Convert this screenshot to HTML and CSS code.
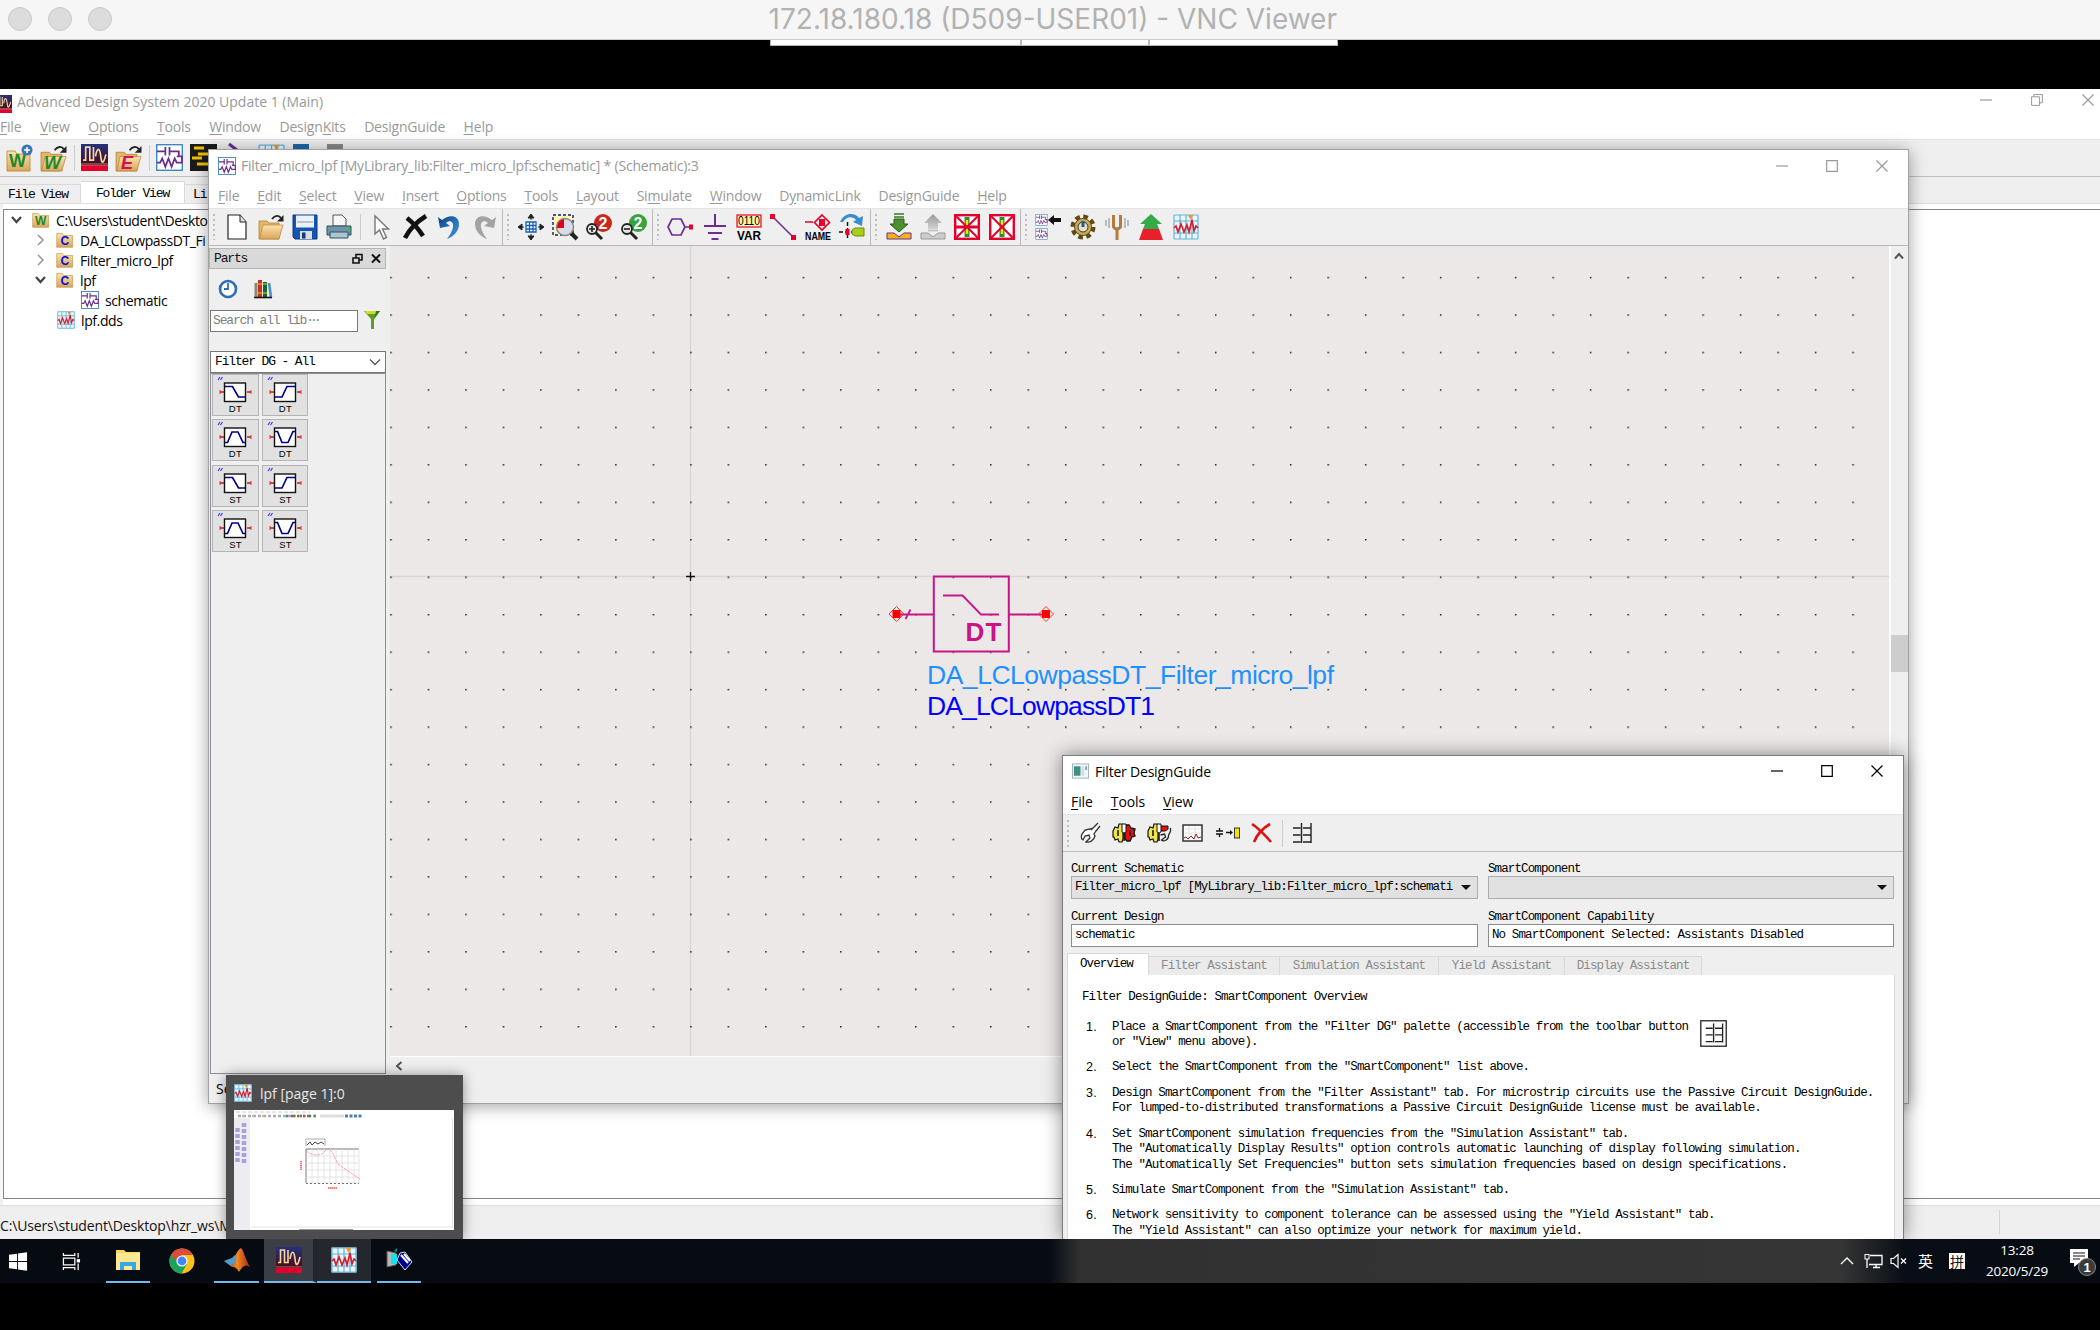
FILE: index.html
```html
<!DOCTYPE html>
<html lang="en">
<head>
<meta charset="utf-8">
<title>172.18.180.18 (D509-USER01) - VNC Viewer</title>
<link rel="stylesheet" href="styles.css">
</head>
<body>
<svg class="defs" width="0" height="0">
  <defs>
    <linearGradient id="g-ads" x1="0" y1="0" x2="0" y2="1"><stop offset="0" stop-color="#23317f"/><stop offset="1" stop-color="#4a0d1c"/></linearGradient>
    <linearGradient id="g-fold" x1="0" y1="0" x2="0" y2="1"><stop offset="0" stop-color="#fbe3b0"/><stop offset="1" stop-color="#dca557"/></linearGradient>
    <linearGradient id="g-up" x1="0" y1="0" x2="0" y2="1"><stop offset="0" stop-color="#9a9a9a"/><stop offset="1" stop-color="#d0d0d0"/></linearGradient>
    <linearGradient id="g-undo" x1="0" y1="0" x2="1" y2="1"><stop offset="0" stop-color="#0d3f8a"/><stop offset="1" stop-color="#3f9be0"/></linearGradient>
    <linearGradient id="g-flame" x1="0" y1="0" x2="1" y2="0"><stop offset="0" stop-color="#7b1d10"/><stop offset=".5" stop-color="#f08a24"/><stop offset="1" stop-color="#a9250f"/></linearGradient>
    <pattern id="grid-dots" x="0.2" y="29.8" width="37.49" height="37.46" patternUnits="userSpaceOnUse"><rect width="1.5" height="1.5" fill="#1c1c1c"/></pattern>
    <symbol id="i-ads" viewBox="0 0 26 26"><rect width="26" height="19" fill="url(#g-ads)"/><rect y="19" width="26" height="1.5" fill="#6d4a4a"/><rect y="20.500" width="26" height="5.500" fill="#e4002b"/><path d="M2 15.500h2.500V3h4v12.500h3.500V3M14 12c1.500-9 4-9 5 0s3 6 5-2" fill="none" stroke="#f6d9a0" stroke-width="1.600"/></symbol>
    <symbol id="i-folder" viewBox="0 0 26 26"><path d="M1 5h8l2 3h13v17H1z" fill="url(#g-fold)" stroke="#b98337" stroke-width=".8"/></symbol>
    <symbol id="i-ofolder" viewBox="0 0 26 26"><path d="M1 7h8l2 2h10v16H1z" fill="#e7b566" stroke="#a87a35" stroke-width=".7"/><path d="M5 11h20l-4 14H1.500z" fill="url(#g-fold)" stroke="#b98337" stroke-width=".7"/><path d="M14 5c3-4 7-4 9-1" fill="none" stroke="#222" stroke-width="1.800"/><path d="M25.500 1v6.500h-6.500z" fill="#222"/></symbol>
    <symbol id="i-sch" viewBox="0 0 26 26"><rect x=".7" y=".7" width="24.600" height="24.600" fill="#fff" stroke="#2a7ab8" stroke-width="1.200"/><path d="M1 7h8M9 3v8M13 3v8M13 7h9v5M1 18h3l2-4 3 8 3-8 3 8 3-8 2 4h5V12h-5" fill="none" stroke="#6b2d90" stroke-width="1.700"/></symbol>
    <symbol id="i-dds" viewBox="0 0 26 26"><rect x=".5" y=".5" width="25" height="25" fill="#eaf6fb"/><path d="M1 1v24M7 1v24M13 1v24M19 1v24M25 1v24M1 1h24M1 7h24M1 19h24M1 25h24" stroke="#5fb4dc" stroke-width="1.200"/><path d="M1 14l2-2 2 6 3-8 3 8 3-7 2 7 3-12 2 11 2-5 2 2" fill="none" stroke="#d3202f" stroke-width="1.700"/><path d="M15 1h5l-2.500 5z" fill="#f7941d"/></symbol>
    <symbol id="i-var" viewBox="0 0 26 26"><rect x="1" y="1" width="24" height="12" fill="#fff6a8" stroke="#e4002b" stroke-width="1.200"/></symbol>
    <symbol id="i-x26" viewBox="0 0 26 26"><rect x="1.200" y="1.200" width="23.600" height="23.600" fill="#fff" stroke="#e4002b" stroke-width="2.400"/><path d="M13 3v20" stroke="#2e8b3a" stroke-width="5"/><path d="M13 6v14" stroke="#f2e300" stroke-width="2.400"/><path d="M1 1l24 24M25 1L1 25" stroke="#e4002b" stroke-width="2"/></symbol>
    <symbol id="i-gear" viewBox="0 0 26 26"><circle cx="13" cy="13" r="10" fill="none" stroke="#5d4a16" stroke-width="5" stroke-dasharray="4.500 3.350"/><circle cx="13" cy="13" r="8.500" fill="#c9ac55" stroke="#5d4a16"/><circle cx="13" cy="13" r="5" fill="#e8e0c0" stroke="#333"/><path d="M13 7v6" stroke="#1f5aa8" stroke-width="3"/></symbol>
    <symbol id="i-table" viewBox="0 0 20 22"><path d="M0 6h7.500M0 13h7.500M0 20h7.500M8.500 1v20M10 6h8M10 13h8M10 20h8M18 1v20" fill="none" stroke="#222" stroke-width="1.400"/></symbol>
    <symbol id="i-dggear" viewBox="0 0 24 22"><path d="M1 9l2-4 3 1 1-4h3l1 1v14l-1 3H7l-1-3-3 1-1-3H1z" fill="#f3e64b" stroke="#111" stroke-width="1.200"/><path d="M10 2h4v8q-2 2-4 0z" fill="#fff" stroke="#111"/><path d="M12 11v8M6 8v6" stroke="#111" stroke-width="1.500"/></symbol>
    <symbol id="f-base" viewBox="0 0 47 42"><path d="M8 18h4M35 18h4" stroke="#111"/><path d="M8 18h3M36 18h3M8 16v4M39 16v4" stroke="#f22"/><rect x="12.500" y="9" width="21" height="18.500" fill="#fff" stroke="#111" stroke-width="1.400"/><path d="M6 6l2-3M8.500 6l2-3" stroke="#33f" stroke-width="1.100"/></symbol>
    <symbol id="f-lp" viewBox="0 0 47 42"><use href="#f-base" width="47" height="42"/><path d="M13 12.500h7.500l6 10.500h7" fill="none" stroke="#00008b" stroke-width="1.700"/></symbol>
    <symbol id="f-hp" viewBox="0 0 47 42"><use href="#f-base" width="47" height="42"/><path d="M13 23h7l5-10.500h8.500" fill="none" stroke="#00008b" stroke-width="1.700"/></symbol>
    <symbol id="f-bp" viewBox="0 0 47 42"><use href="#f-base" width="47" height="42"/><path d="M13 23.500h2.500L20 13h6l5 10.500h2.500" fill="none" stroke="#00008b" stroke-width="1.700"/></symbol>
    <symbol id="f-bs" viewBox="0 0 47 42"><use href="#f-base" width="47" height="42"/><path d="M13 12.500h2.500L20 23.500h6l5-11h2.500" fill="none" stroke="#00008b" stroke-width="1.700"/></symbol>
    <symbol id="w-min" viewBox="0 0 12 12"><path d="M0 6h12" stroke="currentColor" stroke-width="1.200"/></symbol>
    <symbol id="w-max" viewBox="0 0 12 12"><path d="M.7.700h10.600v10.600H.7z" fill="none" stroke="currentColor" stroke-width="1.200"/></symbol>
    <symbol id="w-rest" viewBox="0 0 12 12"><path d="M.6 2.800h8v8.600h-8zM2.800 2.800V.6h8.600v8.200H8.600" fill="none" stroke="currentColor"/></symbol>
    <symbol id="w-close" viewBox="0 0 12 12"><path d="M.5.500l11 11M11.500.500l-11 11" stroke="currentColor" stroke-width="1.200"/></symbol>
  </defs>
</svg>

<div class="screen">
  <header class="vnc-bar">
    <div class="lights"><i></i><i></i><i></i></div>
    <h1>172.18.180.18 (D509-USER01) - VNC Viewer</h1>
  </header>
  <div class="vnc-tab"><i></i><i></i><i></i></div>

  <section class="win main-win">
    <div class="titlebar dim">
      <svg class="ticon"><use href="#i-ads"/></svg>
      <span class="ttext t-main">Advanced Design System 2020 Update 1 (Main)</span>
      <div class="controls"><svg><use href="#w-min"/></svg><svg><use href="#w-rest"/></svg><svg><use href="#w-close"/></svg></div>
    </div>
    <nav class="menu dim"><span><u>F</u>ile</span><span><u>V</u>iew</span><span><u>O</u>ptions</span><span><u>T</u>ools</span><span><u>W</u>indow</span><span>Design<u>K</u>its</span><span>DesignGuide</span><span><u>H</u>elp</span></nav>
    <div class="main-tools">
      <svg viewBox="0 0 28 28"><use href="#i-folder" y="2" width="26" height="26"/><text x="3" y="23" class="lt" fill="#1a8a2c">W</text><circle cx="21" cy="6" r="5.500" fill="#3b74b8"/><path d="M21 3v6M18 6h6" stroke="#fff" stroke-width="1.600"/></svg>
      <svg viewBox="0 0 28 28"><use href="#i-ofolder" y="1" width="27" height="27"/><text x="4" y="25" class="lt it" fill="#1a8a2c">W</text></svg>
      <b></b>
      <svg viewBox="0 0 28 28"><use href="#i-ads" width="27" height="27"/></svg>
      <svg viewBox="0 0 28 28"><use href="#i-ofolder" y="1" width="27" height="27"/><text x="6" y="25" class="lt it" fill="#d3114f">E</text></svg>
      <b></b>
      <svg viewBox="0 0 28 28"><use href="#i-sch" width="27" height="27"/></svg>
      <svg viewBox="0 0 28 28"><rect width="27" height="27" fill="#1b1b1b"/><path d="M4 4h10M8 10h14M2 14h10M7 20h14" stroke="#f2c200" stroke-width="3"/></svg>
      <svg viewBox="0 0 28 28"><path d="M5 0l8 6" stroke="#6b2d90" stroke-width="3"/></svg>
      <svg viewBox="0 0 28 28"><use href="#i-dds" width="27" height="27"/></svg>
      <svg viewBox="0 0 28 28"><rect x="1" width="16" height="20" fill="#1d66a8"/></svg>
      <svg viewBox="0 0 28 28"><rect x="1" width="16" height="20" fill="#888"/></svg>
    </div>
    <div class="main-tabs"><span>File View</span><span class="on">Folder View</span><span>Li</span></div>
    <div class="tree">
      <div class="row"><svg class="ar"><path d="M3 5l4.500 5L12 5" stroke="#444" stroke-width="2.200" fill="none"/></svg><svg class="ti" viewBox="0 0 18 18"><use href="#i-folder" y="-1" width="18" height="18"/><text x="3" y="14" class="ls" fill="#1a8a2c">W</text></svg><span>C:\Users\student\Deskto</span></div>
      <div class="row in"><svg class="ar"><path d="M5 3l5 5-5 5" stroke="#999" stroke-width="1.600" fill="none"/></svg><svg class="ti" viewBox="0 0 18 18"><use href="#i-folder" y="-1" width="18" height="18"/><text x="4.500" y="14" class="ls" fill="#0011dd">C</text></svg><span>DA_LCLowpassDT_Fi</span></div>
      <div class="row in"><svg class="ar"><path d="M5 3l5 5-5 5" stroke="#999" stroke-width="1.600" fill="none"/></svg><svg class="ti" viewBox="0 0 18 18"><use href="#i-folder" y="-1" width="18" height="18"/><text x="4.500" y="14" class="ls" fill="#0011dd">C</text></svg><span>Filter_micro_lpf</span></div>
      <div class="row in"><svg class="ar"><path d="M3 5l4.500 5L12 5" stroke="#444" stroke-width="2.200" fill="none"/></svg><svg class="ti" viewBox="0 0 18 18"><use href="#i-folder" y="-1" width="18" height="18"/><text x="4.500" y="14" class="ls" fill="#0011dd">C</text></svg><span>lpf</span></div>
      <div class="row in2"><svg class="ti"><use href="#i-sch"/></svg><span>schematic</span></div>
      <div class="row in1"><svg class="ti"><use href="#i-dds"/></svg><span>lpf.dds</span></div>
    </div>
    <div class="status"><span>C:\Users\student\Desktop\hzr_ws\M</span><i></i></div>
  </section>

  <section class="win sch-win">
    <div class="titlebar dim">
      <svg class="ticon"><use href="#i-sch"/></svg>
      <span class="ttext t-sch">Filter_micro_lpf [MyLibrary_lib:Filter_micro_lpf:schematic] * (Schematic):3</span>
      <div class="controls"><svg><use href="#w-min"/></svg><svg><use href="#w-max"/></svg><svg><use href="#w-close"/></svg></div>
    </div>
    <nav class="menu dim"><span><u>F</u>ile</span><span><u>E</u>dit</span><span><u>S</u>elect</span><span><u>V</u>iew</span><span><u>I</u>nsert</span><span><u>O</u>ptions</span><span><u>T</u>ools</span><span><u>L</u>ayout</span><span>Si<u>m</u>ulate</span><span><u>W</u>indow</span><span>D<u>y</u>namicLink</span><span>DesignGuide</span><span><u>H</u>elp</span></nav>
    <div class="tools">
      <div class="grp">
        <svg viewBox="0 0 26 26"><path d="M4 1h12l6 7v17H4z" fill="#fff" stroke="#222" stroke-width="1.200"/><path d="M16 1v7h6" fill="#ddd" stroke="#222"/></svg>
        <svg viewBox="0 0 26 26"><use href="#i-ofolder"/></svg>
        <svg viewBox="0 0 26 26"><path d="M1 1h24v24H3l-2-2z" fill="#1555b0" stroke="#0b3a80"/><rect x="4" y="1.500" width="18" height="12" fill="#eaf1f8"/><path d="M5 8h16" stroke="#b6c4d6" stroke-width="2"/><rect x="8" y="17" width="12" height="8" fill="#d8dde3"/><rect x="10" y="18.500" width="3.500" height="6" fill="#123a78"/></svg>
        <svg viewBox="0 0 26 26"><path d="M7 12V1h9l4 4v7z" fill="#f4f8fb" stroke="#555"/><path d="M1 12h24v9H1z" fill="#6f93ab" stroke="#34505f"/><path d="M4 18h18v6H4z" fill="#a9c6d8" stroke="#34505f"/><path d="M22 13v4" stroke="#3c3" stroke-width="2"/></svg>
        <b></b>
        <svg viewBox="0 0 26 26"><path d="M7 2v18l4.500-4 4 9 3-1.500-4-8.500h6z" fill="#fff" stroke="#777" stroke-width="1.400"/></svg>
        <svg viewBox="0 0 26 26"><path d="M5 4c5 4 11 10 16 18M24 2C16 7 8 14 3 24" stroke="#111" stroke-width="4.500" fill="none"/></svg>
        <svg viewBox="0 0 26 26"><path d="M1 3l2 11 10-2-4-3c4-4 8-1 7 4-.5 4-3 8-6 12 8-3 12-9 12-15C22 1 12 0 5 6z" fill="url(#g-undo)"/></svg>
        <svg viewBox="0 0 26 26"><path d="M25 3l-2 11-10-2 4-3c-4-4-8-1-7 4 .5 4 3 8 6 12-8-3-12-9-12-15C4 1 14 0 21 6z" fill="#a3a3a3"/></svg>
      </div>
      <div class="grp">
        <svg viewBox="0 0 26 26"><path d="M13 0l3 4h-6zM13 26l3-4h-6zM0 13l4-3v6zM26 13l-4-3v6zM13 3v3M13 20v3M3 13h3M20 13h3" fill="#222" stroke="#222"/><path d="M8 8h10v10H8zM11.500 8v10M15 8v10M8 11.500h10M8 15h10" fill="#fff" stroke="#1560b8" stroke-width="1.300"/></svg>
        <svg viewBox="0 0 26 26"><path d="M1 1h20v20H1z" fill="#fbf8b0" stroke="#14148c" stroke-dasharray="3 2" stroke-width="1.400"/><path d="M18 18l7 7" stroke="#222" stroke-width="4"/><circle cx="13" cy="13" r="8.500" fill="#d8dce6" stroke="#888" stroke-width="1.500"/><path d="M12 5v9H5c0-5 3-8.500 7-9z" fill="#e4001b"/></svg>
        <svg viewBox="0 0 26 26"><path d="M9 18l7 7" stroke="#222" stroke-width="3"/><circle cx="17" cy="9" r="9" fill="#c8281c"/><text x="12.500" y="15" class="lz">2</text><circle cx="6" cy="15" r="5" fill="#e6e6e6" stroke="#222" stroke-width="1.800"/><path d="M6 12v6M3 15h6" stroke="#222" stroke-width="1.600"/></svg>
        <svg viewBox="0 0 26 26"><path d="M9 18l7 7" stroke="#222" stroke-width="3"/><circle cx="17" cy="9" r="9" fill="#37a33a"/><text x="12.500" y="15" class="lz">2</text><circle cx="6" cy="15" r="5" fill="#e6e6e6" stroke="#222" stroke-width="1.800"/><path d="M3 15h6" stroke="#222" stroke-width="1.600"/></svg>
      </div>
      <div class="grp">
        <svg viewBox="0 0 26 26"><path d="M1 13l4-8h9l4 8-4 8H5zM18 13h4" fill="none" stroke="#6b2d90" stroke-width="1.700"/><rect x="22" y="10.500" width="4" height="5" fill="#e4002b"/></svg>
        <svg viewBox="0 0 26 26"><path d="M13 0v12M2 12h22M6 19h14M9.500 25h7" stroke="#6b2d90" stroke-width="2"/></svg>
        <svg viewBox="0 0 26 26"><use href="#i-var"/><text x="2" y="11" textLength="22" lengthAdjust="spacingAndGlyphs" class="ln">0110</text><text x="1" y="26" textLength="24" lengthAdjust="spacingAndGlyphs" class="lv">VAR</text></svg>
        <svg viewBox="0 0 26 26"><path d="M3 3l20 20" stroke="#6b2d90" stroke-width="1.600"/><path d="M0 0h5v5H0zM21 21h5v5h-5z" fill="#e4002b"/></svg>
        <svg viewBox="0 0 26 26"><path d="M0 8h8M17 1l7.500 7.500L17 16 9.500 8.500z" fill="none" stroke="#e4002b" stroke-width="1.700"/><rect x="14" y="5" width="6" height="7" fill="#e4002b"/><text x="0" y="26" textLength="26" lengthAdjust="spacingAndGlyphs" class="lm">NAME</text></svg>
        <svg viewBox="0 0 26 26"><path d="M1 8C5-2 16-2 20 4l4-2-1 10-9-4 3-2c-3-4-10-4-13 2z" fill="#3a8ccc"/><path d="M8.500 8v18M0 18h14" stroke="#111" stroke-width="1.500" stroke-dasharray="4 2"/><rect x="6.500" y="15" width="4" height="6" fill="#e4002b"/><path d="M13 16l3-2h9v8h-9l-3-2z" fill="#a8cf1e" stroke="#6d8a10"/></svg>
      </div>
      <div class="grp">
        <svg viewBox="0 0 26 26"><path d="M8 0h10M8 3h10" stroke="#3d7a22" stroke-width="1.600"/><path d="M8 5h10v5h4l-9 8-9-8h4z" fill="#4b9130" stroke="#2c5c18"/><path d="M1 19h7l5 4 5-4h7v6H1z" fill="#f7b316" stroke="#6b2d90"/></svg>
        <svg viewBox="0 0 26 26"><path d="M13 0l9 9h-4v6H8V9H4z" fill="url(#g-up)"/><path d="M8 16.500h10" stroke="#bbb" stroke-width="1.600"/><path d="M1 19h7l5 4 5-4h7v6H1z" fill="#ccc" stroke="#999"/></svg>
        <svg viewBox="0 0 26 26"><use href="#i-x26"/><path d="M1 13h24" stroke="#e4002b" stroke-width="3"/></svg>
        <svg viewBox="0 0 26 26"><use href="#i-x26"/></svg>
      </div>
      <div class="grp last">
        <svg viewBox="0 0 26 26"><use href="#i-sch" width="13" height="12"/><use href="#i-sch" y="14" width="13" height="12"/><path d="M13 6l6-5v3h7v4h-7v3z" fill="#111"/></svg>
        <svg viewBox="0 0 26 26"><use href="#i-gear"/></svg>
        <svg viewBox="0 0 26 26"><path d="M9.500 1v12q3.500 4 7 0V1M13 15v11" fill="none" stroke="#b57a3c" stroke-width="3"/><path d="M5 4v10M2 6v6M21 4v10M24 6v6" stroke="#888"/></svg>
        <svg viewBox="0 0 26 26"><path d="M13 0l11 10h-5l2 5H5l2-5H2z" fill="#35ab48"/><path d="M5 15h16l4 11H1z" fill="#e8202a"/></svg>
        <svg viewBox="0 0 26 26"><use href="#i-dds"/></svg>
      </div>
    </div>
    <div class="work">
      <aside class="parts">
        <div class="phead"><span>Parts</span><svg viewBox="0 0 30 12"><path d="M1 5h6v5H1zM4 5V1.500h6V7H7" fill="none" stroke="#111" stroke-width="1.600"/><path d="M20 1.500l8 8M28 1.500l-8 8" stroke="#111" stroke-width="2"/></svg></div>
        <div class="pico">
          <svg viewBox="0 0 20 20"><circle cx="10" cy="10" r="8" fill="#fff" stroke="#2f6bbd" stroke-width="2.600"/><path d="M10 4v6H6" fill="none" stroke="#2f6bbd" stroke-width="1.800"/></svg>
          <svg viewBox="0 0 20 20"><path d="M3 4v14" stroke="#8a8a6a" stroke-width="3"/><path d="M7 1v17" stroke="#c8302a" stroke-width="4"/><path d="M12 3v15" stroke="#14692e" stroke-width="4"/><path d="M16 4l2 14" stroke="#4a8fd0" stroke-width="2.600"/><path d="M5 5h9M5 14h9" stroke="#e8d020"/><path d="M1 18.500h18" stroke="#111" stroke-width="1.600"/></svg>
        </div>
        <div class="psearch"><div class="sbox">Search all lib<em>···</em></div><svg viewBox="0 0 16 20"><path d="M0 1h16l-6 8v10H7V9z" fill="#5c9e1e"/><path d="M1 1h14l-2 3H3z" fill="#d2dc28"/><path d="M12 1h4l-6 8z" fill="#2b7a1e"/></svg></div>
        <div class="combo"><span>Filter DG - All</span><svg viewBox="0 0 12 8"><path d="M1 1.500l5 5 5-5" fill="none" stroke="#555" stroke-width="1.300"/></svg></div>
        <div class="plist">
          <div class="pb"><svg><use href="#f-lp"/></svg><span>DT</span></div><div class="pb"><svg><use href="#f-hp"/></svg><span>DT</span></div>
          <div class="pb"><svg><use href="#f-bp"/></svg><span>DT</span></div><div class="pb"><svg><use href="#f-bs"/></svg><span>DT</span></div>
          <div class="pb"><svg><use href="#f-lp"/></svg><span>ST</span></div><div class="pb"><svg><use href="#f-hp"/></svg><span>ST</span></div>
          <div class="pb"><svg><use href="#f-bp"/></svg><span>ST</span></div><div class="pb"><svg><use href="#f-bs"/></svg><span>ST</span></div>
        </div>
      </aside>
      <div class="canvas-col">
        <svg class="canvas" width="1499" height="810" viewBox="0 0 1499 810">
          <rect width="1499" height="810" fill="#ece8e8"/>
          <g transform="translate(0 1)">
            <path d="M300.500 -1v810M0 329.500h1499" stroke="#dad6d6" stroke-width="1.500"/>
            <rect width="1498" height="808" fill="url(#grid-dots)"/>
            <path d="M296 329.500h9M300.500 325v9" stroke="#111" stroke-width="1.300"/>
            <g fill="none" stroke="#c71585">
              <rect x="543.800" y="329.500" width="75" height="75" stroke-width="2"/>
              <path d="M507 367.500h37M619 367.500h37M553 348.500h19.500l18.500 19h18M515.500 372l5-9.500" stroke-width="1.800"/>
            </g>
            <path d="M502.500 363h8v8h-8zM652 363h8v8h-8z" fill="#f00"/>
            <path d="M499 367l7.500-7.500 7.500 7.500-7.500 7.500zM648.500 367l7.500-7.500 7.500 7.500-7.500 7.500z" fill="none" stroke="#f22" stroke-width=".9"/>
            <text x="575.500" y="394" textLength="36" class="c-dt">DT</text>
            <text x="537" y="437" textLength="407" class="c-lbl" fill="#1e90ff">DA_LCLowpassDT_Filter_micro_lpf</text>
            <text x="537" y="468" textLength="228" class="c-lbl" fill="#0000ff">DA_LCLowpassDT1</text>
          </g>
        </svg>
        <div class="hscroll"><svg viewBox="0 0 8 10"><path d="M6.500 1L2 5l4.500 4" fill="none" stroke="#555" stroke-width="2"/></svg></div>
      </div>
      <div class="vscroll"><svg viewBox="0 0 10 8"><path d="M1 6.500L5 2l4 4.500" fill="none" stroke="#555" stroke-width="2"/></svg><i></i></div>
    </div>
    <div class="sstatus">Se</div>
  </section>

  <section class="win dlg">
    <div class="titlebar">
      <svg class="ticon" viewBox="0 0 18 16"><rect x=".5" y=".5" width="17" height="15" fill="#f4f7f9" stroke="#9fb0b8"/><rect x="2" y="3" width="7" height="10" fill="#3f8f86"/><rect x="10" y="3" width="3" height="10" fill="#d4dde2"/><rect x="14" y="3" width="2" height="4" fill="#78a8d0"/></svg>
      <span class="ttext">Filter DesignGuide</span>
      <div class="controls"><svg><use href="#w-min"/></svg><svg><use href="#w-max"/></svg><svg><use href="#w-close"/></svg></div>
    </div>
    <nav class="menu"><span><u>F</u>ile</span><span><u>T</u>ools</span><span><u>V</u>iew</span></nav>
    <div class="dtools">
      <svg viewBox="0 0 24 22"><path d="M20 1l-7 7M22 4l-4 5-2 3 1 2c-1 4-5 7-9 6l4-4-1-3-4 1-2 4c-2-1-2-4-1-6l3-4 5-1 3-1" fill="#fff" stroke="#333" stroke-width="1.300"/></svg>
      <svg viewBox="0 0 24 22"><path d="M13 5l1-2h3l2 3 4 1-1 4 1 3-3 1-2 4h-3l-2-2z" fill="#e01010" stroke="#111" stroke-width="1.300"/><path d="M18 8v6" stroke="#111" stroke-width="1.500"/><use href="#i-dggear"/></svg>
      <svg viewBox="0 0 24 22"><path d="M13 4h8v5h-8z" fill="#e01010" stroke="#111"/><use href="#i-dggear"/><path d="M23.500 6c1 5-2 5-2 8 0 4-5 6-7 4l4-3-1-3-4 1" fill="#eee" stroke="#222" stroke-width="1.300"/></svg>
      <svg viewBox="0 0 24 22"><rect x="2" y="3" width="19" height="16" fill="#fafafa" stroke="#333" stroke-width="1.500"/><path d="M4 7h15M4 11h15M8 4v14M14 4v14" stroke="#e4e4e4"/><path d="M3 16l2-1 2 2 3-3 3 3 2-5 2 4 3-1" fill="none" stroke="#9a2020"/></svg>
      <svg viewBox="0 0 24 22"><path d="M0 9h7M0 12h7M3.500 6v3M3.500 12v3M10 10.500h5" stroke="#111" stroke-width="1.300"/><path d="M14 8l3 2.500-3 2.500z" fill="#111"/><rect x="18.500" y="6" width="5" height="10" fill="#f2e300" stroke="#333"/></svg>
      <svg viewBox="0 0 24 22"><path d="M2 2c6 4 13 11 19 18M20 2C13 6 7 13 4 20" fill="none" stroke="#e01010" stroke-width="2.600"/></svg>
      <b></b>
      <svg viewBox="0 0 24 22"><use href="#i-table" x="2" width="20" height="22"/></svg>
    </div>
    <div class="form">
      <div class="field"><label>Current Schematic</label><div class="sel"><span>Filter_micro_lpf [MyLibrary_lib:Filter_micro_lpf:schemati</span><i></i></div></div>
      <div class="field"><label>SmartComponent</label><div class="sel"><span></span><i></i></div></div>
      <div class="field"><label>Current Design</label><div class="inp">schematic</div></div>
      <div class="field"><label>SmartComponent Capability</label><div class="inp">No SmartComponent Selected: Assistants Disabled</div></div>
    </div>
    <div class="dtabs"><span class="on">Overview</span><span>Filter Assistant</span><span>Simulation Assistant</span><span>Yield Assistant</span><span>Display Assistant</span></div>
    <div class="panel">
      <p class="hd">Filter DesignGuide: SmartComponent Overview</p>
      <ol>
        <li><b>1.</b><div>Place a SmartComponent from the "Filter DG" palette (accessible from the toolbar button<br>or "View" menu above).</div><svg class="tbl" viewBox="0 0 27 27"><rect x=".8" y=".8" width="25.400" height="25.400" fill="#fff" stroke="#111" stroke-width="1.200"/><use href="#i-table" x="5.500" y="2.500" width="19" height="21"/></svg></li>
        <li><b>2.</b><div>Select the SmartComponent from the "SmartComponent" list above.</div></li>
        <li><b>3.</b><div>Design SmartComponent from the "Filter Assistant" tab. For microstrip circuits use the Passive Circuit DesignGuide.<br>For lumped-to-distributed transformations a Passive Circuit DesignGuide license must be available.</div></li>
        <li><b>4.</b><div>Set SmartComponent simulation frequencies from the "Simulation Assistant" tab.<br>The "Automatically Display Results" option controls automatic launching of display following simulation.<br>The "Automatically Set Frequencies" button sets simulation frequencies based on design specifications.</div></li>
        <li><b>5.</b><div>Simulate SmartComponent from the "Simulation Assistant" tab.</div></li>
        <li><b>6.</b><div>Network sensitivity to component tolerance can be assessed using the "Yield Assistant" tab.<br>The "Yield Assistant" can also optimize your network for maximum yield.</div></li>
      </ol>
    </div>
  </section>

  <div class="preview">
    <div class="pvh"><svg><use href="#i-dds"/></svg><span>lpf [page 1]:0</span></div>
    <svg class="thumb" viewBox="0 0 220 120">
      <rect width="220" height="120" fill="#fff"/><rect y="8" width="16" height="112" fill="#ececf2"/><path d="M2 2h74" stroke="#ccc" stroke-dasharray="4 2"/>
      <path d="M4 6h80" stroke="#a9a8c4" stroke-width="2.500" stroke-dasharray="3 2"/><path d="M8 6h30" stroke="#e0b060" stroke-width="2" stroke-dasharray="2 8"/><path d="M52 6h30" stroke="#3a9a4a" stroke-width="2.500" stroke-dasharray="2 5"/><path d="M57 6h20" stroke="#c44" stroke-width="2.500" stroke-dasharray="2 4"/><path d="M86 6h24" stroke="#ddd" stroke-width="3"/><path d="M111 6h17" stroke="#4a84a4" stroke-width="3" stroke-dasharray="3 1.500"/>
      <path d="M3.500 18v36M10 13v40" stroke="#a7a2dc" stroke-width="4.500" stroke-dasharray="4 2"/>
      <path d="M72 36v-7h19v7" stroke="#aaa" fill="none"/><path d="M73 35l3-3 2 3 3-3 3 2 3-2 3 2" stroke="#444" fill="none"/>
      <path d="M72 39h53M72 39v34" stroke="#777" fill="none"/><path d="M78 39v34M84 39v34M90 39v34M96 39v34M102 39v34M108 39v34M114 39v34M120 39v34M125 39v34M72 46h53M72 53h53M72 60h53M72 67h53M72 73h53" stroke="#ddd" stroke-width=".8"/>
      <path d="M72 73.500h53" stroke="#777" stroke-dasharray="2 2"/><path d="M72 41q8 6 16 3l6-6 4 4 6 12 10 7 12 8" fill="none" stroke="#f88" stroke-width=".8" stroke-dasharray="3 1"/><path d="M67 51v9M94 78h9" stroke="#f77" stroke-width="2" stroke-dasharray="1.500 .5"/>
      <path d="M17 117h202M218.500 8v110" stroke="#e4e4e4"/><path d="M65 119.500h54" stroke="#999"/>
    </svg>
  </div>

  <footer class="taskbar">
    <div class="tk start"><svg viewBox="0 0 20 20"><path d="M0 3l8.500-1.200V9.500H0zM9.500 1.600L19 .3v9.200H9.500zM0 10.500h8.500v7.700L0 17zM9.500 10.500H19v9.200l-9.500-1.300z" fill="#fff"/></svg></div>
    <div class="tk view"><svg viewBox="0 0 20 20"><path d="M1.500 6.500h12v7h-12zM1.500 1v2.500h12V1M1.500 19v-2.500h12V19M17 1v5M17 12v7" fill="none" stroke="#fff" stroke-width="1.300"/><rect x="15.500" y="7.500" width="3.500" height="3.500" fill="#fff"/></svg></div>
    <div class="tk run exp"><svg viewBox="0 0 26 26"><path d="M1 3h8l2 2h14v17H1z" fill="#fbd65c"/><path d="M1 6h24v17H1z" fill="#ffe793"/><path d="M5 23v-8h16v8h-4v-4H9v4z" fill="#35a8e0"/></svg></div>
    <div class="tk chr"><svg viewBox="0 0 26 26"><circle cx="13" cy="13" r="12.500" fill="#fbc116"/><path d="M13 13L2.200 6.700A12.500 12.500 0 0 0 12.500 25.500L18 16z" fill="#1da15f"/><path d="M2.200 6.700A12.500 12.500 0 0 1 23.900 7H13l-6 6z" fill="#dd4b3e"/><circle cx="13" cy="13" r="5.600" fill="#fff"/><circle cx="13" cy="13" r="4.400" fill="#4285f4"/></svg></div>
    <div class="tk run mat"><svg viewBox="0 0 26 26"><path d="M0 14l8-3c4-1 5-8 9-10 3 3 4 11 9 19-4-3-7-2-11 5-2-4-4-5-7-5z" fill="url(#g-flame)"/><path d="M0 14l8-3 3-3 1 6-5 5z" fill="#4b9fd0"/></svg></div>
    <div class="tk run ads"><svg viewBox="0 0 26 26"><use href="#i-ads"/></svg></div>
    <div class="tk run dds"><svg viewBox="0 0 26 26"><use href="#i-dds"/></svg></div>
    <div class="tk run vnc"><svg viewBox="0 0 26 26"><path d="M1 4l9 2v12l-9 2z" fill="#b8b8b8" stroke="#555"/><path d="M5 7h6v10H5z" fill="#0fe3ee"/><path d="M11 13l3-7 5-1 7 10-7 8z" fill="#00008f" stroke="#dde"/><path d="M15 8l7 8M18 7l6 7" stroke="#fff" stroke-width="2"/><path d="M8 4l3-3v4" fill="#0a8a8a"/></svg></div>
    <div class="tray">
      <svg class="y1" viewBox="0 0 14 8"><path d="M1 7l6-6 6 6" fill="none" stroke="#fff" stroke-width="1.400"/></svg>
      <svg class="y2" viewBox="0 0 20 16"><path d="M6 2.500h12v9H5M9 14.500h7M12 11.500v3M3 6v9" fill="none" stroke="#fff" stroke-width="1.300"/><rect x="1" y="1.500" width="4" height="4.500" fill="none" stroke="#fff"/></svg>
      <svg class="y3" viewBox="0 0 18 16"><path d="M1 5.500h2.500L8 1.500v13L3.500 10.500H1z" fill="none" stroke="#fff" stroke-width="1.200"/><path d="M11 5.500l5 5M16 5.500l-5 5" stroke="#fff" stroke-width="1.200"/></svg>
      <span class="ime">英</span><span class="pin">拼</span>
      <div class="clock"><span>13:28</span><span>2020/5/29</span></div>
      <svg class="note" viewBox="0 0 28 30"><path d="M1 1h18v14H10l-5 4v-4H1z" fill="#fff"/><path d="M4 5h12M4 8h12M4 11h7" stroke="#111"/><circle cx="18" cy="19" r="8.500" fill="#3a3a3a" stroke="#888"/><text x="14.500" y="24" class="nn">1</text></svg>
    </div>
  </footer>
</div>
</body>
</html>
```
FILE: styles.css
```css
* { box-sizing: border-box; }
body { margin: 0; background: #000; font-family: "Open Sans", "Noto Sans", sans-serif; font-size: 14px; color: #111; }
.defs { position: absolute; }
svg { display: block; flex: none; overflow: visible; }
.screen { position: relative; width: 2100px; height: 1330px; overflow: hidden; background: #000; }

/* viewer frame */
.vnc-bar { height: 40px; background: #f6f6f6; border-bottom: 1px solid #cfcfcf; display: flex; align-items: center; justify-content: space-between; padding: 0 763px 2px 8px; }
.lights { display: flex; gap: 16px; }
.lights i { width: 24px; height: 24px; border-radius: 50%; background: #dcdcdc; border: 1px solid #cbcbcb; }
.vnc-bar h1 { margin: 0; font: 400 28px/38px Inter, sans-serif; color: #b2b2b2; letter-spacing: 0; white-space: nowrap; }
.vnc-tab { width: 568px; height: 6px; margin-left: 770px; background: #fdfdfd; border: 1px solid #b5b5b5; border-top: 0; display: grid; grid-template-columns: 251px 128px 1fr; }
.vnc-tab i:not(:last-child) { border-right: 2px solid #bbb; }

/* windows */
.win { position: absolute; display: flex; flex-direction: column; background: #efefef; }
.main-win { left: 0; top: 89px; width: 2100px; height: 1150px; }
.sch-win { left: 208px; top: 149px; width: 1701px; height: 955px; border: 1px solid #a2a2a2; box-shadow: 0 2px 16px rgba(0,0,0,.38); }
.dlg { left: 1062px; top: 755px; width: 842px; height: 484px; border: 1px solid #7c7c7c; border-bottom: 0; box-shadow: 0 0 18px rgba(0,0,0,.45); }
.titlebar { display: flex; align-items: center; background: #fff; white-space: nowrap; flex: none; letter-spacing: -.21px; }
.t-main { letter-spacing: 0; }
.dim { color: #999; }
.controls { margin-left: auto; display: flex; }
.controls svg { width: 12px; height: 12px; }
.menu { display: flex; background: #fff; flex: none; border-bottom: 1px solid #e4e4e4; letter-spacing: -.2px; }
.menu span { white-space: pre; }
.menu u { text-underline-offset: 2px; }

/* main window */
.main-win .titlebar { height: 25px; padding: 0 6px 0 0; }
.main-win .ticon { width: 18px; height: 18px; margin: 4px 5px 0 -6px; }
.main-win .controls { gap: 39px; margin-top: -3px; }
.main-win .menu { height: 26px; line-height: 26px; padding-left: 0; gap: 18.500px; }
.main-tools { height: 37px; display: flex; align-items: center; gap: 6px; padding: 0 6px; border-bottom: 1px solid #bfbfbf; flex: none; }
.main-tools svg { width: 28px; height: 28px; }
.main-tools b { width: 1px; height: 26px; background: #ccc; }
.lt { font: 700 18px "Liberation Sans", sans-serif; }
.it { font-style: italic; }
.ls { font: 700 12px "Liberation Sans", sans-serif; }
.main-tabs { height: 27px; display: flex; align-items: flex-end; flex: none; font: 13px/19px "Liberation Mono", monospace; letter-spacing: -1.150px; border-bottom: 1px solid #ddd; color: #000; }
.main-tabs span { height: 19px; padding: 0 12px 0 8px; border: 1px solid #d9d9d9; border-width: 1px 1px 0 0; white-space: nowrap; }
.main-tabs .on { height: 22px; background: #fff; padding: 2px 15px 0; }
.tree { flex: none; height: 990px; background: #fff; border: 1px solid #82868f; border-right: 0; margin: 5px 0 0 3px; padding-left: 5px; letter-spacing: -.4px; box-shadow: 0 -5px #fff, 0 6px #fff, -4px 0 #f6f6f6; }
.row { display: flex; height: 20px; align-items: center; gap: 6px; white-space: nowrap; color: #000; }
.row.in { padding-left: 24px; }
.row.in2 { padding-left: 72px; }
.row.in1 { padding-left: 48px; }
.ar { width: 17px; height: 16px; }
.ti { width: 18px; height: 18px; }
.status { flex: 1; margin-top: 6px; border-top: 1px solid #ddd; display: flex; align-items: center; justify-content: space-between; padding: 7px 100px 0 0; letter-spacing: -.15px; background: #efefef; line-height: 20px; }
.status i { width: 1px; height: 24px; background: #d4d4d4; margin-top: -8px; }

/* schematic window */
.sch-win .titlebar { height: 33px; padding: 0 20px 2px 9px; }
.sch-win .ticon { width: 18px; height: 18px; margin-right: 5px; }
.sch-win .controls { gap: 38px; }
.sch-win .menu { height: 26px; line-height: 25px; padding-left: 9px; gap: 17.800px; }
.tools { height: 37px; display: flex; flex: none; border-bottom: 1px solid #b8b8b8; }
.grp { display: flex; align-items: center; padding: 0 5.300px 0 14.500px; gap: 8.300px; border-right: 1px solid #b9b9b9; background: repeating-linear-gradient(#bdbdbd 0 2px, #efefef 2px 5px) 4px 5px / 2px 26px no-repeat; }
.grp.last { border: 0; }
.grp svg { width: 26px; height: 26px; }
.grp b { width: 1px; height: 26px; background: #ccc; margin: 0 -1px; }
.ln { font: 12px "Liberation Sans", sans-serif; }
.lv { font: 700 13px "Liberation Sans", sans-serif; }
.lm { font: 700 11px "Liberation Sans", sans-serif; }
.lz { font: 700 16px "Liberation Sans", sans-serif; fill: #fff; }
.work { display: flex; height: 828px; flex: none; }
.parts { width: 177px; padding-top: 2px; display: flex; flex-direction: column; font: 13px/20px "Liberation Mono", monospace; letter-spacing: -1.150px; }
.phead { height: 21px; background: #d9d9d9; border: 1px solid #b5b5b5; display: flex; justify-content: space-between; align-items: center; padding: 0 3px 0 4px; }
.phead svg { width: 30px; height: 12px; }
.pico { display: flex; gap: 15px; padding: 10px 0 0 9px; height: 41px; }
.pico svg { width: 20px; height: 20px; }
.psearch { display: flex; gap: 6px; padding: 0 0 0 1px; height: 21px; }
.sbox { width: 148px; height: 22px; background: #fff; border: 1px solid #777; padding-left: 2px; color: #808080; }
.sbox em { font-style: normal; letter-spacing: -4px; }
.psearch svg { width: 16px; height: 20px; }
.combo { margin: 20px 0 0 1px; height: 22px; border: 1px solid #777; background: #fff; display: flex; align-items: center; justify-content: space-between; padding: 0 4px; color: #000; }
.combo svg { width: 12px; height: 8px; }
.plist { flex: 1; margin-left: 1px; border: 1px solid #8a8e98; display: grid; grid-template-columns: 47px 46px; grid-auto-rows: 42px; gap: 3.300px 3px; padding: 0 1px; align-content: start; }
.pb { border: 1px solid #b4b4b4; background: #e1e1e1; display: grid; }
.pb svg, .pb span { grid-area: 1 / 1; }
.pb svg { width: 47px; height: 42px; margin: -1px; }
.pb span { align-self: end; justify-self: center; font: 9.500px/12px "Liberation Sans", sans-serif; letter-spacing: .3px; color: #000; }
.canvas-col { width: 1499px; margin-left: 4px; }
.c-dt { font: 700 26px "Liberation Sans", sans-serif; fill: #c71585; }
.c-lbl { font: 26.500px "Liberation Sans", sans-serif; }
.hscroll { height: 18px; padding: 4px 5px; border-top: 1px solid #fff; }
.hscroll svg { width: 8px; height: 10px; }
.vscroll { width: 19px; border-left: 2px solid #fafafa; }
.vscroll svg { width: 10px; height: 8px; margin: 6px 0 0 3px; }
.vscroll i { display: block; width: 17px; height: 37px; margin-top: 375px; background: #cdcdcd; }
.sstatus { padding-left: 7px; line-height: 30px; color: #000; }

/* design guide dialog */
.dlg .titlebar { height: 33px; padding: 0 20px 2px 9px; color: #000; }
.dlg .ticon { width: 17px; height: 16px; margin: -1px 6px 0 0; }
.dlg .controls { gap: 38px; margin-top: -1px; }
.dlg .menu { height: 26px; line-height: 26px; padding-left: 8px; gap: 18px; letter-spacing: -.1px; color: #000; }
.dtools { height: 37px; flex: none; display: flex; align-items: center; padding-left: 15px; gap: 10.400px; border-bottom: 1px solid #bdbdbd; background: repeating-linear-gradient(#bdbdbd 0 2px, #efefef 2px 5px) 4px 5px / 2px 28px no-repeat; }
.dtools svg { width: 24px; height: 22px; }
.dtools b { width: 1px; height: 27px; background: #ccc; margin: 0 -2.500px; }
.form, .dtabs, .panel { font-family: "Liberation Mono", monospace; font-size: 12.500px; letter-spacing: -.880px; }
.form { display: grid; grid-template-columns: 407px 406px; column-gap: 10px; padding: 8px 8px 0; flex: none; }
.field { height: 48px; }
.field label { display: block; height: 15.500px; line-height: 18px; color: #000; }
.sel, .inp { height: 23px; border: 1px solid #adadad; line-height: 21px; padding: 0 3px; white-space: nowrap; color: #000; }
.sel { background: #e1e1e1; display: flex; align-items: center; justify-content: space-between; padding-right: 6px; }
.sel i { border: 5px solid transparent; border-top-color: #111; border-bottom: 0; }
.inp { background: #fff; border-color: #8c8c8c; }
.dtabs { display: grid; grid-template-columns: 82px 131px 159px 126px 137px; align-items: end; margin: -3px 0 0 4px; height: 22px; flex: none; color: #8a8a8a; text-align: center; }
.dtabs span { height: 19px; line-height: 19px; border: 1px solid #d9d9d9; border-width: 1px 1px 0 0; background: #ebebeb; white-space: nowrap; }
.dtabs .on { height: 22px; background: #fff; color: #000; padding: 1px 3px 0 0; border-left-width: 1px; }
.panel { flex: 1; min-height: 0; margin: 0 8px 0 4px; background: #fff; border: 1px solid #dcdcdc; border-width: 0 1px; padding: 15px 0 0 14px; line-height: 15.600px; overflow: hidden; color: #000; white-space: nowrap; }
.panel p { margin: 0 0 14px; }
.panel ol { margin: 0; padding: 0; list-style: none; display: flex; flex-direction: column; gap: 9.700px; }
.panel li { display: flex; }
.panel li b { width: 30px; padding-left: 4px; flex: none; font: 12.500px/15.600px "Liberation Sans", sans-serif; letter-spacing: .3px; }
.tbl { width: 27px; height: 27px; margin: 0 0 -4px 12px; }

/* taskbar preview */
.preview { position: absolute; left: 226px; top: 1075px; width: 237px; height: 164px; background: #4d4d4d; padding: 9px 8px; box-shadow: 0 0 12px rgba(0,0,0,.4); }
.pvh { display: flex; align-items: center; gap: 8px; height: 18px; color: #e8e8e8; }
.pvh svg { width: 18px; height: 18px; }
.thumb { width: 220px; height: 120px; margin-top: 8px; }

/* taskbar */
.taskbar { position: absolute; left: 0; top: 1239px; width: 2100px; height: 44px; display: flex; background: linear-gradient(90deg, #060b12 0, #070c14 1050px, #313131 1080px, #353535 1840px, #090e16 1905px, #060b12 100%); }
.tk { display: flex; align-items: center; justify-content: center; height: 44px; flex: none; }
.tk svg { width: 26px; height: 26px; }
.start { width: 37px; }
.view { width: 69px; }
.start svg, .view svg { width: 19px; height: 19px; }
.run { border-bottom: 2px solid #76b9ed; }
.exp { width: 44px; }
.chr { width: 64px; }
.mat { width: 45px; }
.ads { width: 53px; margin-left: 5px; background: #3b3e44; border-right: 4px solid #22262c; }
.dds { width: 54px; background: #24282e; }
.vnc { width: 44px; margin-left: 6px; }
.tray { margin-left: auto; display: flex; align-items: center; color: #fff; padding-right: 3px; }
.y1 { width: 14px; height: 8px; margin-right: 10px; }
.y2 { width: 20px; height: 16px; margin-right: 6px; }
.y3 { width: 18px; height: 16px; margin-right: 10px; }
.ime, .pin { font: 15px/16px "Noto Sans CJK SC", sans-serif; }
.ime { width: 15px; margin-right: 16px; }
.pin { width: 16px; height: 16px; background: #fff; color: #111; font-size: 14px; text-align: center; margin-right: 18px; }
.clock { display: flex; flex-direction: column; align-items: center; line-height: 21px; font-size: 13.500px; letter-spacing: -.2px; width: 68px; margin-right: 18px; }
.note { width: 28px; height: 30px; margin-top: 4px; }
.nn { font: 700 13px "Liberation Sans", sans-serif; fill: #fff; }
```
